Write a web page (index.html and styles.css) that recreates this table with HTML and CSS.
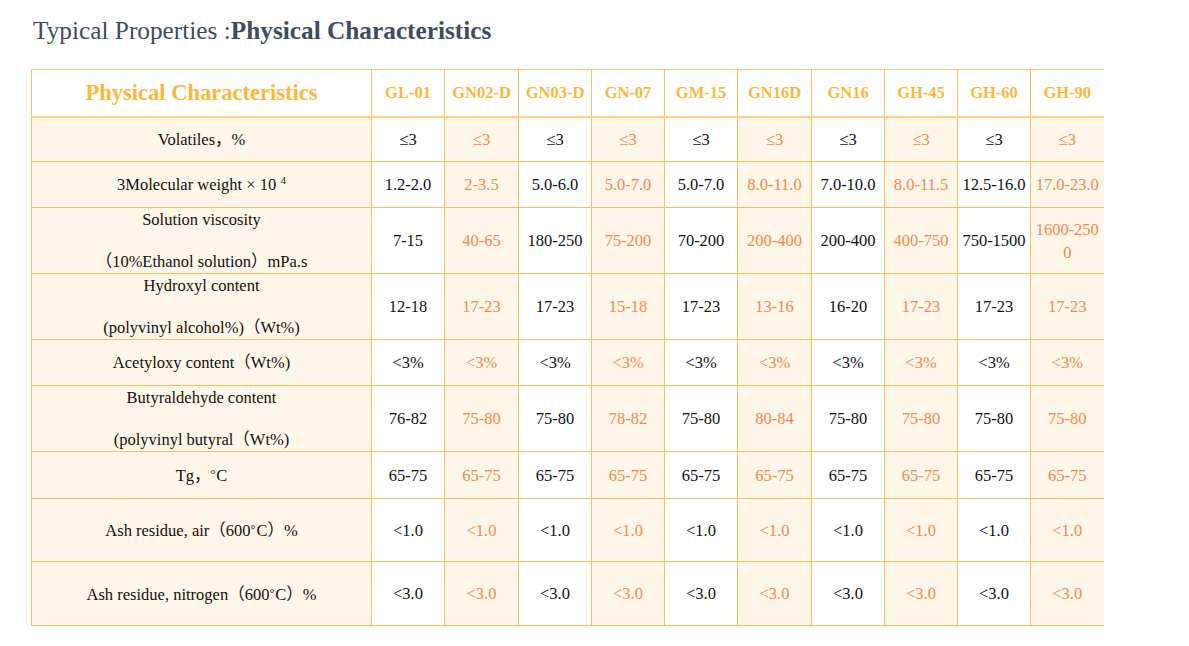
FILE: index.html
```html
<!DOCTYPE html>
<html lang="en">
<head>
<meta charset="utf-8">
<title>Typical Properties</title>
<link rel="stylesheet" href="styles.css">
</head>
<body>
<div class="page">
  <h1 class="title">Typical Properties :<b>Physical Characteristics</b></h1>
  <table class="props">
    <colgroup>
      <col class="c-label">
      <col class="c73"><col class="c74"><col class="c73"><col class="c73"><col class="c73">
      <col class="c74"><col class="c73"><col class="c73"><col class="c73"><col class="c73">
    </colgroup>
    <thead>
      <tr class="r-head">
        <th class="label-head">Physical Characteristics</th>
        <th>GL-01</th><th>GN02-D</th><th>GN03-D</th><th>GN-07</th><th>GM-15</th>
        <th>GN16D</th><th>GN16</th><th>GH-45</th><th>GH-60</th><th>GH-90</th>
      </tr>
    </thead>
    <tbody>
      <tr class="r45">
        <td class="label">Volatiles，%</td>
        <td>≤3</td><td class="alt">≤3</td><td>≤3</td><td class="alt">≤3</td><td>≤3</td>
        <td class="alt">≤3</td><td>≤3</td><td class="alt">≤3</td><td>≤3</td><td class="alt">≤3</td>
      </tr>
      <tr class="r46">
        <td class="label">3Molecular weight × 10 <sup>4</sup></td>
        <td>1.2-2.0</td><td class="alt">2-3.5</td><td>5.0-6.0</td><td class="alt">5.0-7.0</td><td>5.0-7.0</td>
        <td class="alt">8.0-11.0</td><td>7.0-10.0</td><td class="alt">8.0-11.5</td><td>12.5-16.0</td><td class="alt">17.0-23.0</td>
      </tr>
      <tr class="r66">
        <td class="label">Solution viscosity<br><br>（10%Ethanol solution）mPa.s</td>
        <td>7-15</td><td class="alt">40-65</td><td>180-250</td><td class="alt">75-200</td><td>70-200</td>
        <td class="alt">200-400</td><td>200-400</td><td class="alt">400-750</td><td>750-1500</td><td class="alt">1600-2500</td>
      </tr>
      <tr class="r66">
        <td class="label">Hydroxyl content<br><br>(polyvinyl alcohol%)（Wt%)</td>
        <td>12-18</td><td class="alt">17-23</td><td>17-23</td><td class="alt">15-18</td><td>17-23</td>
        <td class="alt">13-16</td><td>16-20</td><td class="alt">17-23</td><td>17-23</td><td class="alt">17-23</td>
      </tr>
      <tr class="r46">
        <td class="label">Acetyloxy content（Wt%)</td>
        <td>&lt;3%</td><td class="alt">&lt;3%</td><td>&lt;3%</td><td class="alt">&lt;3%</td><td>&lt;3%</td>
        <td class="alt">&lt;3%</td><td>&lt;3%</td><td class="alt">&lt;3%</td><td>&lt;3%</td><td class="alt">&lt;3%</td>
      </tr>
      <tr class="r66">
        <td class="label">Butyraldehyde content<br><br>(polyvinyl butyral（Wt%)</td>
        <td>76-82</td><td class="alt">75-80</td><td>75-80</td><td class="alt">78-82</td><td>75-80</td>
        <td class="alt">80-84</td><td>75-80</td><td class="alt">75-80</td><td>75-80</td><td class="alt">75-80</td>
      </tr>
      <tr class="r47">
        <td class="label">Tg，<span class="deg">°</span>C</td>
        <td>65-75</td><td class="alt">65-75</td><td>65-75</td><td class="alt">65-75</td><td>65-75</td>
        <td class="alt">65-75</td><td>65-75</td><td class="alt">65-75</td><td>65-75</td><td class="alt">65-75</td>
      </tr>
      <tr class="r63">
        <td class="label">Ash residue, air（600<span class="deg">°</span>C）%</td>
        <td>&lt;1.0</td><td class="alt">&lt;1.0</td><td>&lt;1.0</td><td class="alt">&lt;1.0</td><td>&lt;1.0</td>
        <td class="alt">&lt;1.0</td><td>&lt;1.0</td><td class="alt">&lt;1.0</td><td>&lt;1.0</td><td class="alt">&lt;1.0</td>
      </tr>
      <tr class="r64">
        <td class="label">Ash residue, nitrogen（600<span class="deg">°</span>C）%</td>
        <td>&lt;3.0</td><td class="alt">&lt;3.0</td><td>&lt;3.0</td><td class="alt">&lt;3.0</td><td>&lt;3.0</td>
        <td class="alt">&lt;3.0</td><td>&lt;3.0</td><td class="alt">&lt;3.0</td><td>&lt;3.0</td><td class="alt">&lt;3.0</td>
      </tr>
    </tbody>
  </table>
</div>
</body>
</html>
```
FILE: styles.css
```css
html, body {
  margin: 0;
  padding: 0;
  background: #ffffff;
}

.page {
  padding: 15px 0 0 31px;
  font-family: "Liberation Serif", "Noto Sans CJK SC", serif;
}

.title {
  margin: 0 0 24px 2px;
  font-size: 25.3px;
  line-height: 30px;
  font-weight: normal;
  color: #3e4c60;
}

.title b {
  font-weight: bold;
}

.props {
  border-collapse: collapse;
  table-layout: fixed;
  width: 1072px;
  font-size: 16.5px;
  color: #111111;
}

.c-label { width: 340px; }
.c73 { width: 73px; }
.c74 { width: 74px; }

.props th,
.props td {
  border: 1px solid #f9c05a;
  padding: 0 3px;
  text-align: center;
  vertical-align: middle;
  word-break: break-all;
  line-height: 23px;
}

.props tr > :last-child {
  border-right: none;
}

.props th {
  color: #fbb838;
  font-weight: bold;
  background: #ffffff;
}

.props thead tr th {
  border-bottom: 2px solid #fdd288;
  border-top: 1px solid #fcca72;
}

.props .label-head {
  font-size: 22.5px;
}

.props td.label {
  background: #fef6e9;
  line-height: 21px;
  word-break: normal;
}

.props td.alt {
  background: #fef6e9;
  color: #f08a4a;
}

.props sup {
  font-size: 11px;
  line-height: 0;
  vertical-align: 6px;
}

.props .deg {
  font-size: 12px;
  vertical-align: 3px;
  margin-right: 1px;
}

.r-head { height: 47px; }
.r45 { height: 45px; }
.r46 { height: 46px; }
.r47 { height: 47px; }
.r63 { height: 63px; }
.r64 { height: 64px; }
.r66 { height: 66px; }
```
